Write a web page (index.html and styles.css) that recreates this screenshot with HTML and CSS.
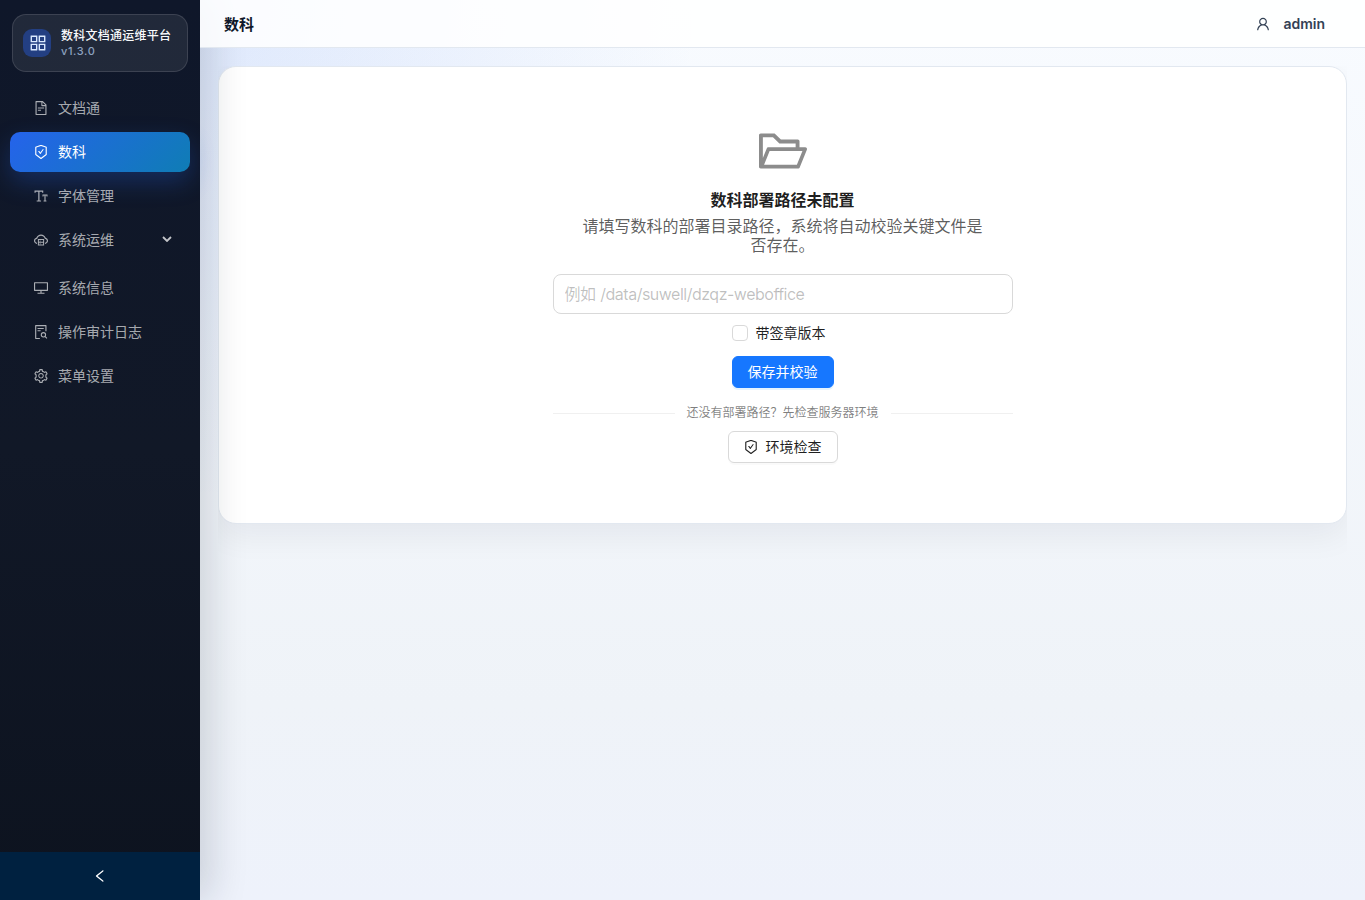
FILE: index.html
```html
<!DOCTYPE html>
<html lang="zh-CN">
<head>
    <meta charset="UTF-8">
    <meta name="viewport" content="width=device-width, initial-scale=1.0">
    <title>数科文档通运维平台</title>
    <link rel="stylesheet" href="styles.css">
</head>
<body>
    <svg class="sprite" viewBox="64 64 896 896">
        <symbol id="icon-shield" viewBox="64 64 896 896">
            <path d="M866.9 169.9L527.1 54.1C523 52.7 517.5 52 512 52s-11 .7-15.1 2.1L157.1 169.9c-8.3 2.8-15.1 12.4-15.1 21.2v482.4c0 8.8 5.7 20.4 12.6 25.9L499.3 968c3.5 2.7 8 4.1 12.6 4.1s9.2-1.4 12.6-4.1l344.7-268.6c6.9-5.4 12.6-17 12.6-25.9V191.1c.2-8.8-6.6-18.3-14.9-21.2zM810 654.3L512 886.5 214 654.3V226.7l298-101.6 298 101.6v427.6zm-405.8-201c-3-4.1-7.8-6.6-13-6.6H336c-6.5 0-10.3 7.4-6.5 12.7l126.4 174a16.1 16.1 0 0026 0l212.6-292.7c3.8-5.3 0-12.7-6.5-12.7h-55.2c-5.1 0-10 2.5-13 6.6L468.9 542.4l-64.7-89.1z"/>
        </symbol>
    </svg>
    <div class="layout">
        <aside class="sider">
            <div class="brand">
                <div class="brand-logo">
                    <svg class="brand-icon" viewBox="64 64 896 896"><path d="M464 144H160c-8.8 0-16 7.2-16 16v304c0 8.8 7.2 16 16 16h304c8.8 0 16-7.2 16-16V160c0-8.8-7.2-16-16-16zm-52 268H212V212h200v200zm452-268H560c-8.8 0-16 7.2-16 16v304c0 8.8 7.2 16 16 16h304c8.8 0 16-7.2 16-16V160c0-8.8-7.2-16-16-16zm-52 268H612V212h200v200zM464 544H160c-8.8 0-16 7.2-16 16v304c0 8.8 7.2 16 16 16h304c8.8 0 16-7.2 16-16V560c0-8.8-7.2-16-16-16zm-52 268H212V612h200v200zm452-268H560c-8.8 0-16 7.2-16 16v304c0 8.8 7.2 16 16 16h304c8.8 0 16-7.2 16-16V560c0-8.8-7.2-16-16-16zm-52 268H612V612h200v200z"/></svg>
                </div>
                <div class="brand-text">
                    <div class="brand-title">数科文档通运维平台</div>
                    <div class="brand-version">v1.3.0</div>
                </div>
            </div>
            <nav class="menu">
                <a class="menu-item">
                    <svg class="icon" viewBox="64 64 896 896"><path d="M854.6 288.6L639.4 73.4c-6-6-14.1-9.4-22.6-9.4H192c-17.7 0-32 14.3-32 32v832c0 17.7 14.3 32 32 32h640c17.7 0 32-14.3 32-32V311.3c0-8.5-3.4-16.7-9.4-22.7zM790.2 326H602V137.8L790.2 326zm1.8 562H232V136h302v216a42 42 0 0042 42h216v494zM504 618H320c-4.4 0-8 3.6-8 8v48c0 4.4 3.6 8 8 8h184c4.4 0 8-3.6 8-8v-48c0-4.4-3.6-8-8-8zM312 490v48c0 4.4 3.6 8 8 8h384c4.4 0 8-3.6 8-8v-48c0-4.4-3.6-8-8-8H320c-4.4 0-8 3.6-8 8z"/></svg>
                    <span>文档通</span>
                </a>
                <a class="menu-item active">
                    <svg class="icon"><use href="#icon-shield"/></svg>
                    <span>数科</span>
                </a>
                <a class="menu-item">
                    <svg class="icon" viewBox="64 64 896 896"><path d="M920 416H616c-4.4 0-8 3.6-8 8v112c0 4.4 3.6 8 8 8h48c4.4 0 8-3.6 8-8v-56h60v320h-46c-4.4 0-8 3.6-8 8v48c0 4.4 3.6 8 8 8h164c4.4 0 8-3.6 8-8v-48c0-4.4-3.6-8-8-8h-46V480h60v56c0 4.4 3.6 8 8 8h48c4.4 0 8-3.6 8-8V424c0-4.4-3.6-8-8-8zM656 296V168c0-4.4-3.6-8-8-8H104c-4.4 0-8 3.6-8 8v128c0 4.4 3.6 8 8 8h56c4.4 0 8-3.6 8-8v-64h168v560h-92c-4.4 0-8 3.6-8 8v56c0 4.4 3.6 8 8 8h264c4.4 0 8-3.6 8-8v-56c0-4.4-3.6-8-8-8h-92V232h168v64c0 4.4 3.6 8 8 8h56c4.4 0 8-3.6 8-8z"/></svg>
                    <span>字体管理</span>
                </a>
                <a class="menu-item submenu">
                    <svg class="icon" viewBox="64 64 896 896"><path d="M704 446H320c-4.4 0-8 3.6-8 8v402c0 4.4 3.6 8 8 8h384c4.4 0 8-3.6 8-8V454c0-4.4-3.6-8-8-8zm-328 64h272v117H376V510zm272 290H376V683h272v117z"/><path d="M424 748a32 32 0 1064 0 32 32 0 10-64 0zm0-178a32 32 0 1064 0 32 32 0 10-64 0z"/><path d="M811.4 368.9C765.6 248 648.9 162 512.2 162S258.8 247.9 213 368.8C126.9 391.5 63.5 470.2 64 563.6 64.6 668 145.6 752.9 247.6 762c4.7.4 8.7-3.3 8.7-8v-60.4c0-4-3-7.4-7-7.9-27-3.4-52.5-15.2-72.1-34.5-24-23.5-37.2-55.1-37.2-88.6 0-28 9.1-54.4 26.2-76.4 16.7-21.4 40.2-36.9 66.1-43.7l37.9-10 13.9-36.7c8.6-22.8 20.6-44.2 35.7-63.5 14.9-19.2 32.6-36 52.4-50 41.1-28.9 89.5-44.2 140-44.2s98.9 15.3 140 44.3c19.9 14 37.5 30.8 52.4 50 15.1 19.3 27.1 40.7 35.7 63.5l13.8 36.6 37.8 10c54.2 14.4 92.1 63.7 92.1 120 0 33.6-13.2 65.1-37.2 88.6-19.5 19.2-44.9 31.1-71.9 34.5-4 .5-6.9 3.9-6.9 7.9V754c0 4.7 4.1 8.4 8.8 8 101.7-9.2 182.5-94 183.2-198.2.6-93.4-62.7-172.1-148.6-194.9z"/></svg>
                    <span>系统运维</span>
                    <svg class="arrow" viewBox="0 0 10 6"><path d="M1 1l4 4 4-4"/></svg>
                </a>
                <a class="menu-item">
                    <svg class="icon" viewBox="64 64 896 896"><path d="M928 140H96c-17.7 0-32 14.3-32 32v496c0 17.7 14.3 32 32 32h380v112H304c-8.8 0-16 7.2-16 16v48c0 4.4 3.6 8 8 8h432c4.4 0 8-3.6 8-8v-48c0-8.8-7.2-16-16-16H548V700h380c17.7 0 32-14.3 32-32V172c0-17.7-14.3-32-32-32zm-40 488H136V212h752v416z"/></svg>
                    <span>系统信息</span>
                </a>
                <a class="menu-item">
                    <svg class="icon" viewBox="64 64 896 896"><path d="M296 250c-4.4 0-8 3.6-8 8v48c0 4.4 3.6 8 8 8h384c4.4 0 8-3.6 8-8v-48c0-4.4-3.6-8-8-8H296zm184 144H296c-4.4 0-8 3.6-8 8v48c0 4.4 3.6 8 8 8h184c4.4 0 8-3.6 8-8v-48c0-4.4-3.6-8-8-8zm-48 494H208V136h584v320c0 4.4 3.6 8 8 8h56c4.4 0 8-3.6 8-8V96c0-17.7-14.3-32-32-32H168c-17.7 0-32 14.3-32 32v832c0 17.7 14.3 32 32 32h264c4.4 0 8-3.6 8-8v-56c0-4.4-3.6-8-8-8z"/><path class="icon-line" d="M530 690a138 138 0 10276 0 138 138 0 10-276 0zM765 790l125 135"/></svg>
                    <span>操作审计日志</span>
                </a>
                <a class="menu-item">
                    <svg class="icon" viewBox="64 64 896 896"><path d="M924.8 625.7l-65.5-56c3.1-19 4.7-38.4 4.7-57.8s-1.6-38.8-4.7-57.8l65.5-56a32.03 32.03 0 009.3-35.2l-.9-2.6a443.74 443.74 0 00-79.7-137.9l-1.8-2.1a32.12 32.12 0 00-35.1-9.5l-81.3 28.9c-30-24.6-63.5-44-99.7-57.6l-15.7-85a32.05 32.05 0 00-25.8-25.7l-2.7-.5c-52.1-9.4-106.9-9.4-159 0l-2.7.5a32.05 32.05 0 00-25.8 25.7l-15.8 85.4a351.86 351.86 0 00-99 57.4l-81.9-29.1a32 32 0 00-35.1 9.5l-1.8 2.1a446.02 446.02 0 00-79.7 137.9l-.9 2.6c-4.5 12.5-.8 26.5 9.3 35.2l66.3 56.6c-3.1 18.8-4.6 38-4.6 57.1 0 19.2 1.5 38.4 4.6 57.1L99 625.5a32.03 32.03 0 00-9.3 35.2l.9 2.6c18.1 50.4 44.9 96.9 79.7 137.9l1.8 2.1a32.12 32.12 0 0035.1 9.5l81.9-29.1c29.8 24.5 63.1 43.9 99 57.4l15.8 85.4a32.05 32.05 0 0025.8 25.7l2.7.5a449.4 449.4 0 00159 0l2.7-.5a32.05 32.05 0 0025.8-25.7l15.7-85a350 350 0 0099.7-57.6l81.3 28.9a32 32 0 0035.1-9.5l1.8-2.1c34.8-41.1 61.6-87.5 79.7-137.9l.9-2.6c4.5-12.3.8-26.3-9.3-35zM788.3 465.9c2.5 15.1 3.8 30.6 3.8 46.1s-1.3 31-3.8 46.1l-6.6 40.1 74.7 63.9a370.03 370.03 0 01-42.6 73.6L721 702.8l-31.4 25.8c-23.9 19.6-50.5 35-79.3 45.8l-38.1 14.3-17.9 97a377.5 377.5 0 01-85 0l-17.9-97.2-37.8-14.5c-28.5-10.8-55-26.2-78.7-45.7l-31.4-25.9-93.4 33.2c-17-22.9-31.2-47.6-42.6-73.6l75.5-64.5-6.5-40c-2.4-14.9-3.7-30.3-3.7-45.5 0-15.3 1.2-30.6 3.7-45.5l6.5-40-75.5-64.5c11.3-26.1 25.6-50.7 42.6-73.6l93.4 33.2 31.4-25.9c23.7-19.5 50.2-34.9 78.7-45.7l37.9-14.3 17.9-97.2c28.1-3.2 56.8-3.2 85 0l17.9 97 38.1 14.3c28.7 10.8 55.4 26.2 79.3 45.8l31.4 25.8 92.8-32.9c17 22.9 31.2 47.6 42.6 73.6L781.8 426l6.5 39.9zM512 326c-97.2 0-176 78.8-176 176s78.8 176 176 176 176-78.8 176-176-78.8-176-176-176zm79.2 255.2A111.6 111.6 0 01512 614c-29.9 0-58-11.7-79.2-32.8A111.6 111.6 0 01400 502c0-29.9 11.7-58 32.8-79.2C454 401.6 482.1 390 512 390c29.9 0 58 11.6 79.2 32.8A111.6 111.6 0 01624 502c0 29.9-11.7 58-32.8 79.2z"/></svg>
                    <span>菜单设置</span>
                </a>
            </nav>
            <div class="collapse">
                <svg class="icon" viewBox="64 64 896 896"><path d="M724 218.3V141c0-6.7-7.7-10.4-12.9-6.3L260.3 486.8a31.86 31.86 0 000 50.3l450.8 352.1c5.3 4.1 12.9.4 12.9-6.3v-77.3c0-4.9-2.3-9.6-6.1-12.6l-360-281 360-281.1c3.8-3 6.1-7.7 6.1-12.6z"/></svg>
            </div>
        </aside>
        <div class="main">
            <header class="header">
                <div class="page-title">数科</div>
                <div class="user">
                    <svg class="icon" viewBox="64 64 896 896"><path d="M858.5 763.6a374 374 0 00-80.6-119.5 375.63 375.63 0 00-119.5-80.6c-.4-.2-.8-.3-1.2-.5C719.5 518 760 444.7 760 362c0-137-111-248-248-248S264 225 264 362c0 82.7 40.5 156 102.8 201.1-.4.2-.8.3-1.2.5-44.8 18.9-85 46-119.5 80.6a375.63 375.63 0 00-80.6 119.5A371.7 371.7 0 00136 901.8a8 8 0 008 8.2h60c4.4 0 7.9-3.5 8-7.8 2-77.2 33-149.5 87.8-204.3 56.7-56.7 132-87.9 212.2-87.9s155.5 31.2 212.2 87.9C779 752.7 810 825 812 902.2c.1 4.4 3.6 7.8 8 7.8h60a8 8 0 008-8.2c-1-47.8-10.9-94.3-29.5-138.2zM512 534c-45.9 0-89.1-17.9-121.6-50.4S340 407.9 340 362c0-45.9 17.9-89.1 50.4-121.6S466.1 190 512 190s89.1 17.9 121.6 50.4S684 316.1 684 362c0 45.9-17.9 89.1-50.4 121.6S557.9 534 512 534z"/></svg>
                    <span>admin</span>
                </div>
            </header>
            <main class="content">
                <section class="card">
                    <svg class="folder" viewBox="64 64 896 896"><path d="M928 444H820V330.4c0-17.7-14.3-32-32-32H473L355.7 186.2a8.15 8.15 0 00-5.5-2.2H96c-17.7 0-32 14.3-32 32v592c0 17.7 14.3 32 32 32h698c13 0 24.8-7.9 29.7-20l134-332c1.5-3.8 2.3-7.9 2.3-12 0-17.7-14.3-32-32-32zM136 256h188.5l119.6 114.4H748V444H238c-13 0-24.8 7.9-29.7 20L136 643.2V256zm635.3 512H159l103.3-256h612.4L771.3 768z"/></svg>
                    <h1 class="empty-title">数科部署路径未配置</h1>
                    <p class="empty-desc">请填写数科的部署目录路径，系统将自动校验关键文件是否存在。</p>
                    <input class="path-input" type="text" placeholder="例如 /data/suwell/dzqz-weboffice">
                    <label class="checkbox">
                        <input type="checkbox">
                        <span>带签章版本</span>
                    </label>
                    <button class="btn btn-primary">保存并校验</button>
                    <div class="divider"><span>还没有部署路径？先检查服务器环境</span></div>
                    <button class="btn btn-check">
                        <svg class="icon"><use href="#icon-shield"/></svg>
                        <span>环境检查</span>
                    </button>
                </section>
            </main>
        </div>
    </div>
</body>
</html>
```
FILE: styles.css
```css
* {
    box-sizing: border-box;
}
body {
    margin: 0;
    font-family: Inter, "Noto Sans CJK SC", sans-serif;
    font-size: 14px;
    color: rgba(0, 0, 0, 0.88);
}
.sprite {
    display: none;
}
.icon {
    width: 14px;
    height: 14px;
    flex: none;
    fill: currentColor;
}
.icon-line {
    fill: none;
    stroke: currentColor;
    stroke-width: 68;
}
.layout {
    display: flex;
    height: 100vh;
    overflow: hidden;
}

/* sidebar */
.sider {
    width: 200px;
    flex: none;
    display: flex;
    flex-direction: column;
    position: relative;
    z-index: 1;
    background: linear-gradient(180deg, #0f172a 0%, #111827 50%, #0d131f 100%);
    box-shadow: 10px 0 36px rgba(15, 23, 42, 0.16);
}
.brand {
    display: flex;
    align-items: center;
    gap: 10px;
    height: 58px;
    margin: 14px 12px 16px;
    padding: 0 10px;
    border: 1px solid rgba(255, 255, 255, 0.12);
    border-radius: 14px;
    background: rgba(255, 255, 255, 0.08);
}
.brand-logo {
    display: flex;
    align-items: center;
    justify-content: center;
    width: 28px;
    height: 28px;
    padding-left: 1px;
    border-radius: 9px;
    background: #233f82;
}
.brand-icon {
    width: 18px;
    height: 18px;
    fill: #dbeafe;
}
.brand-title {
    font-size: 12px;
    line-height: 16px;
    font-weight: 500;
    letter-spacing: 0.24px;
    color: #f8fafc;
    white-space: nowrap;
}
.brand-version {
    font-size: 11px;
    line-height: 15px;
    font-weight: 500;
    letter-spacing: 0.6px;
    color: #8ea3c0;
}
.menu {
    flex: 1;
    display: flex;
    flex-direction: column;
    gap: 4px;
    padding: 0 10px;
}
.menu-item {
    display: flex;
    align-items: center;
    gap: 10px;
    height: 40px;
    padding: 0 18px 0 24px;
    border-radius: 10px;
    color: rgba(255, 255, 255, 0.65);
}
.menu-item span,
.checkbox span,
.btn-check span,
.divider span {
    padding-bottom: 2px;
}
.menu-item.active {
    color: #fff;
    background: linear-gradient(135deg, #2563eb, #0f7db5);
    box-shadow: 0 10px 24px rgba(37, 99, 235, 0.28);
}
.submenu {
    margin-bottom: 4px;
}
.arrow {
    width: 10px;
    height: 6px;
    margin: 0 0 2px auto;
    fill: none;
    stroke: rgba(255, 255, 255, 0.75);
    stroke-width: 1.8;
}
.collapse {
    display: flex;
    align-items: center;
    justify-content: center;
    height: 48px;
    background: #002140;
    color: #fff;
}

/* main area */
.main {
    flex: 1;
    min-width: 0;
    background: radial-gradient(circle at top left, rgba(37, 99, 235, 0.12), transparent 34%), linear-gradient(180deg, #f8fbff 0%, #eff3f8 78%, #eef2fb 100%);
}
.header {
    display: flex;
    align-items: center;
    justify-content: space-between;
    position: relative;
    z-index: 2;
    height: 48px;
    padding: 0 40px 0 24px;
    border-bottom: 1px solid #e2e8f0;
    background: rgba(255, 255, 255, 0.86);
}
.page-title {
    font-size: 15px;
    font-weight: 600;
    color: #0f172a;
}
.user {
    display: flex;
    align-items: center;
    gap: 13px;
    font-weight: 600;
    color: #334155;
}
.content {
    height: calc(100vh - 84px);
    margin: 18px;
    overflow: hidden;
}
.card {
    display: flex;
    flex-direction: column;
    align-items: center;
    height: 458px;
    padding-top: 60px;
    border: 1px solid #e2e8f0;
    border-radius: 18px;
    background: #fff;
    box-shadow: 0 12px 32px rgba(15, 23, 42, 0.06);
}
.folder {
    width: 48px;
    height: 48px;
    fill: #8c8c8c;
}
.empty-title {
    margin: 13px 0 0;
    font-size: 16px;
    line-height: 25px;
    font-weight: 600;
}
.empty-desc {
    width: 400px;
    margin: 4px 0 0;
    font-size: 16px;
    line-height: 19px;
    text-align: center;
    color: rgba(0, 0, 0, 0.65);
}
.path-input {
    width: 460px;
    height: 40px;
    margin-top: 19px;
    padding: 0 11px;
    border: 1px solid #d9d9d9;
    border-radius: 8px;
    font-family: inherit;
    font-size: 16px;
    letter-spacing: -0.5px;
    word-spacing: 0.8px;
}
.path-input::placeholder {
    color: rgba(0, 0, 0, 0.25);
}
.checkbox {
    display: flex;
    align-items: center;
    gap: 8px;
    height: 22px;
    margin-top: 8px;
    padding-right: 8px;
}
.checkbox input {
    appearance: none;
    width: 16px;
    height: 16px;
    margin: 0;
    border: 1px solid #d9d9d9;
    border-radius: 4px;
    background: #fff;
}
.btn {
    display: flex;
    align-items: center;
    gap: 8px;
    height: 32px;
    padding: 0 15px;
    border: 1px solid #d9d9d9;
    border-radius: 6px;
    background: #fff;
    box-shadow: 0 2px 0 rgba(0, 0, 0, 0.02);
    font-family: inherit;
    font-size: 14px;
    color: inherit;
}
.btn-primary {
    margin-top: 12px;
    padding-bottom: 2px;
    border-color: #1677ff;
    background: #1677ff;
    box-shadow: 0 2px 0 rgba(5, 145, 255, 0.1);
    color: #fff;
}
.divider {
    display: flex;
    align-items: center;
    gap: 12px;
    width: 460px;
    height: 17px;
    margin-top: 16px;
    font-size: 12px;
    color: rgba(0, 0, 0, 0.5);
}
.divider::before,
.divider::after {
    content: "";
    flex: 1;
    margin-top: 2px;
    border-top: 1px solid rgba(5, 5, 5, 0.06);
}
.btn-check {
    margin-top: 10px;
}
```
